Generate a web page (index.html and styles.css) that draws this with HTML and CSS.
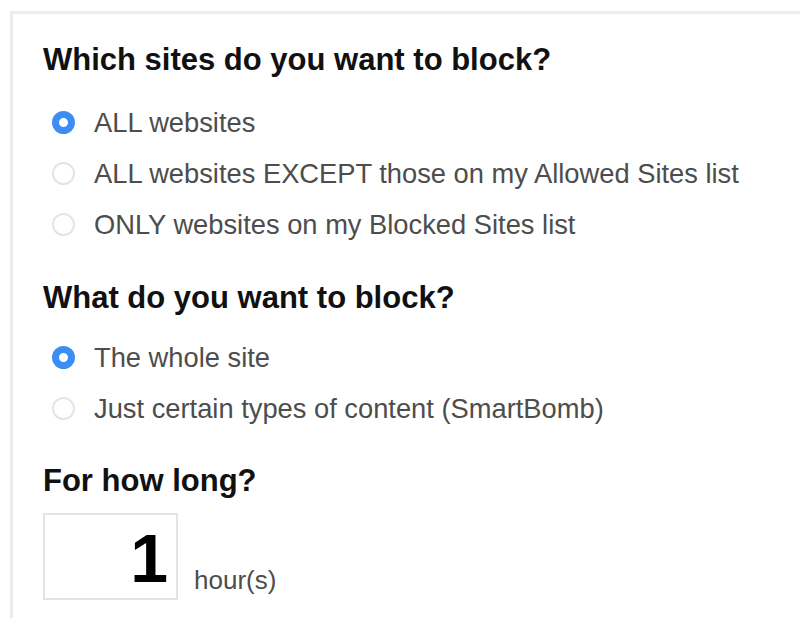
FILE: index.html
```html
<!DOCTYPE html>
<html>
<head>
<meta charset="utf-8">
<link rel="stylesheet" href="styles.css">
</head>
<body>
<div class="panel">
  <h2 class="q">Which sites do you want to block?</h2>
  <ul class="opts">
    <li class="opt"><span class="radio on"></span><span>ALL websites</span></li>
    <li class="opt"><span class="radio"></span><span>ALL websites EXCEPT those on my Allowed Sites list</span></li>
    <li class="opt"><span class="radio"></span><span>ONLY websites on my Blocked Sites list</span></li>
  </ul>
  <h2 class="q">What do you want to block?</h2>
  <ul class="opts opts-tight">
    <li class="opt"><span class="radio on"></span><span>The whole site</span></li>
    <li class="opt"><span class="radio"></span><span>Just certain types of content (SmartBomb)</span></li>
  </ul>
  <h2 class="q">For how long?</h2>
  <div class="dur">
    <div class="num">1</div>
    <span class="unit">hour(s)</span>
  </div>
</div>
</body>
</html>
```
FILE: styles.css
```css
html, body { margin: 0; padding: 0; background: #fff; }
body {
  font-family: "Liberation Sans", Arial, sans-serif;
  padding: 11px 0 0 10px;
  height: 618px;
  box-sizing: border-box;
  overflow: hidden;
}
.panel {
  border-top: 3px solid #ececec;
  border-left: 3px solid #ececec;
  padding: 28px 0 0 30px;
  height: 607px;
  box-sizing: border-box;
  overflow: hidden;
}
.q {
  margin: 0;
  font-size: 31px;
  font-weight: bold;
  color: #111;
  line-height: 36px;
}
.opts {
  list-style: none;
  margin: 19px 0 30px;
  padding: 0;
}
.opts-tight {
  margin-top: 16px;
  margin-bottom: 29px;
}
.opt {
  display: flex;
  align-items: center;
  gap: 19px;
  height: 51px;
  font-size: 27.3px;
  color: #4d4d4d;
}
.radio {
  width: 23px;
  height: 23px;
  border-radius: 50%;
  border: 2px solid #e4e4e4;
  box-sizing: border-box;
  margin-left: 9px;
  flex: none;
}
.radio.on {
  border: 7px solid #3d8ef2;
  background: #fff;
}
.dur {
  display: flex;
  align-items: flex-end;
  gap: 16px;
  margin-top: 14px;
}
.num {
  width: 135px;
  height: 87px;
  box-sizing: border-box;
  border: 2px solid #e4e4e4;
  text-align: right;
  font-size: 68px;
  font-weight: bold;
  line-height: 86px;
  padding-right: 8px;
  color: #000;
}
.unit {
  font-size: 26px;
  color: #4d4d4d;
  line-height: 28px;
  margin-bottom: 6px;
}
```
